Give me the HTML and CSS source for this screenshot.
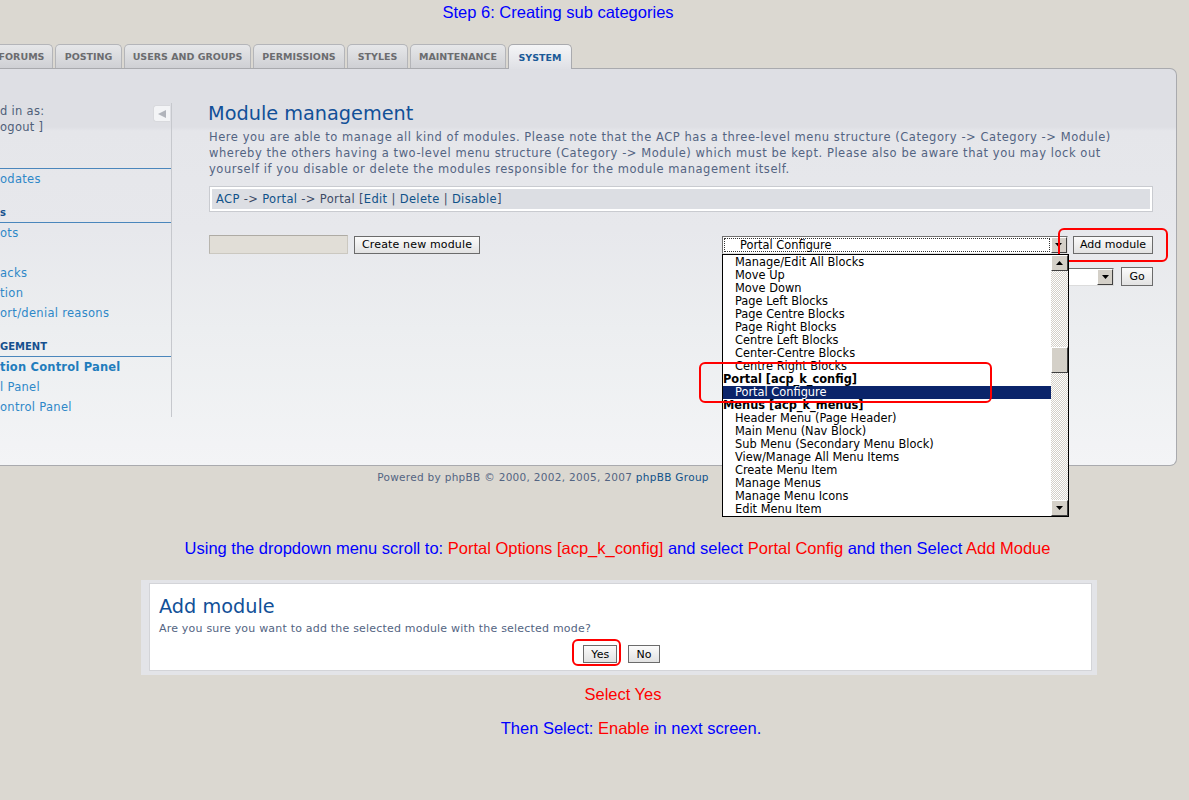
FILE: index.html
```html
<!DOCTYPE html>
<html>
<head>
<meta charset="utf-8">
<title>Step 6: Creating sub categories</title>
<link rel="stylesheet" href="styles.css">
</head>
<body>
<div class="step">Step 6: Creating sub categories</div>

<div class="tabs">
  <div class="tab t-forums">FORUMS</div>
  <div class="tab t-posting">POSTING</div>
  <div class="tab t-users">USERS AND GROUPS</div>
  <div class="tab t-perms">PERMISSIONS</div>
  <div class="tab t-styles">STYLES</div>
  <div class="tab t-maint">MAINTENANCE</div>
  <div class="tab t-system active">SYSTEM</div>
</div>

<div class="panel">
  <div class="side">
    <span class="collapse"><svg width="10" height="10" viewBox="0 0 10 10"><polygon points="9,1 9,9 1,5" fill="#b1b4bb"/></svg></span>
    <div class="login">d in as:<br>ogout ]</div>
    <div class="mhead"></div>
    <div class="mitem">odates</div>
    <div class="mhead">s</div>
    <div class="mitem">ots</div>
    <div class="mitem"></div>
    <div class="mitem">acks</div>
    <div class="mitem">tion</div>
    <div class="mitem">ort/denial reasons</div>
    <div class="mhead">GEMENT</div>
    <div class="mitem current">tion Control Panel</div>
    <div class="mitem">l Panel</div>
    <div class="mitem">ontrol Panel</div>
  </div>

  <div class="main">
    <h1 class="title">Module management</h1>
    <p class="desc">Here you are able to manage all kind of modules. Please note that the ACP has a three-level menu structure (Category -&gt; Category -&gt; Module)<br>whereby the others having a two-level menu structure (Category -&gt; Module) which must be kept. Please also be aware that you may lock out<br>yourself if you disable or delete the modules responsible for the module management itself.</p>

    <div class="crumb"><div class="crumb-in"><a href="#">ACP</a> -&gt; <a href="#">Portal</a> -&gt; Portal [<a href="#">Edit</a> | <a href="#">Delete</a> | <a href="#">Disable</a>]</div></div>

    <div class="row1">
      <div class="grp">
        <span class="input"></span>
        <span class="btn">Create new module</span>
      </div>
      <div class="grp grp-right">
        <div class="select sel-main">
          <span class="sel-val"><span class="focus">Portal Configure</span></span>
          <span class="sel-btn"><svg width="7" height="4" viewBox="0 0 7 4"><polygon points="0,0 7,0 3.5,4" fill="#000"/></svg></span>
          <div class="droplist">
            <div class="opts">
              <div class="opt">Manage/Edit All Blocks</div>
              <div class="opt">Move Up</div>
              <div class="opt">Move Down</div>
              <div class="opt">Page Left Blocks</div>
              <div class="opt">Page Centre Blocks</div>
              <div class="opt">Page Right Blocks</div>
              <div class="opt">Centre Left Blocks</div>
              <div class="opt">Center-Centre Blocks</div>
              <div class="opt">Centre Right Blocks</div>
              <div class="opt grp-opt">Portal [acp_k_config]</div>
              <div class="opt chosen">Portal Configure</div>
              <div class="opt grp-opt">Menus [acp_k_menus]</div>
              <div class="opt">Header Menu (Page Header)</div>
              <div class="opt">Main Menu (Nav Block)</div>
              <div class="opt">Sub Menu (Secondary Menu Block)</div>
              <div class="opt">View/Manage All Menu Items</div>
              <div class="opt">Create Menu Item</div>
              <div class="opt">Manage Menus</div>
              <div class="opt">Manage Menu Icons</div>
              <div class="opt">Edit Menu Item</div>
            </div>
            <div class="sb">
              <span class="sbb"><svg width="7" height="4" viewBox="0 0 7 4"><polygon points="0,4 7,4 3.5,0" fill="#000"/></svg></span>
              <span class="thumb"></span>
              <span class="sb-rest"></span>
              <span class="sbb"><svg width="7" height="4" viewBox="0 0 7 4"><polygon points="0,0 7,0 3.5,4" fill="#000"/></svg></span>
            </div>
            <span class="ring ring-portal"></span>
          </div>
        </div>
        <span class="rel">
          <span class="btn btn-add">Add module</span>
          <span class="ring ring-add"></span>
        </span>
      </div>
    </div>

    <div class="row2">
      <div class="select sel-2">
        <span class="sel-val"></span>
        <span class="sel-btn"><svg width="7" height="4" viewBox="0 0 7 4"><polygon points="0,0 7,0 3.5,4" fill="#000"/></svg></span>
      </div>
      <span class="btn">Go</span>
    </div>
  </div>
</div>

<div class="footer">Powered by phpBB © 2000, 2002, 2005, 2007 <a href="#">phpBB Group</a></div>

<p class="instr">Using the dropdown menu scroll to: <span class="red">Portal Options [acp_k_config]</span> and select <span class="red">Portal Config</span> and then Select <span class="red">Add Modue</span></p>

<div class="confirm">
  <div class="confirm-in">
    <h2 class="ctitle">Add module</h2>
    <p class="ctext">Are you sure you want to add the selected module with the selected mode?</p>
    <div class="cbtns">
      <span class="rel">
        <span class="btn">Yes</span>
        <span class="ring ring-yes"></span>
      </span>
      <span class="btn">No</span>
    </div>
  </div>
</div>

<p class="note red">Select Yes</p>
<p class="note note2">Then Select: <span class="red">Enable</span> in next screen.</p>
</body>
</html>
```

FILE: styles.css
```css
* { box-sizing: border-box; }
html, body { margin: 0; padding: 0; }
body {
  background: #dbd8d1;
  font-family: "DejaVu Sans", Verdana, sans-serif;
  width: 1189px;
  min-height: 800px;
  overflow-x: hidden;
}
a { color: #105289; text-decoration: none; }

.step {
  font-family: "Liberation Sans", Arial, sans-serif;
  font-size: 16.5px;
  line-height: 20px;
  color: #0000ff;
  text-align: center;
  width: 1116px;
  padding-top: 2px;
}

/* tabs */
.tabs {
  display: flex;
  align-items: flex-end;
  gap: 2px;
  height: 24px;
  margin-top: 22px;
  position: relative;
  z-index: 2;
}
.tab {
  height: 24px;
  border: 1px solid #b4b5b9;
  border-bottom: 0;
  border-radius: 5px 5px 0 0;
  background: linear-gradient(#e6e7e9, #cfd0d4);
  color: #6b6c6f;
  font-weight: bold;
  font-size: 9.5px;
  display: flex;
  align-items: center;
  justify-content: center;
  white-space: nowrap;
}
.t-forums { width: 63px; margin-left: -10px; }
.t-posting { width: 67px; }
.t-users { width: 127px; }
.t-perms { width: 92px; }
.t-styles { width: 61px; }
.t-maint { width: 96px; }
.t-system { width: 64px; }
.tab.active {
  height: 25px;
  margin-bottom: -1px;
  background: linear-gradient(#f4f5f7, #dfe0e5);
  color: #1b5a98;
  border-color: #a9aaae;
}

/* panel */
.panel {
  width: 1177px;
  display: flex;
  border-top: 1px solid #a9aaae;
  border-right: 1px solid #a9aaae;
  border-bottom: 1px solid #a9aaae;
  border-radius: 0 7px 7px 0;
  background: linear-gradient(180deg, #dedfe4 0, #dedfe4 58px, #e5e6ea 62px, #e7e8ec 160px, #eceef0 260px, #f3f4f6 100%);
  padding-bottom: 48px;
}
.side {
  width: 172px;
  flex: none;
  margin-top: 34px;
  border-right: 1px solid #c6c8cd;
  position: relative;
}
.collapse {
  position: absolute;
  right: 1px;
  top: 2px;
  width: 17px;
  height: 17px;
  background: #f3f4f6;
  border: 1px solid #d8d9dd;
  border-right: 0;
  border-radius: 3px 0 0 3px;
  display: flex;
  align-items: center;
  justify-content: center;
}
.login {
  font-size: 11.5px;
  letter-spacing: 0.3px;
  line-height: 16px;
  color: #4f5f79;
}
.mhead {
  margin-top: 16px;
  height: 18px;
  line-height: 16px;
  padding-bottom: 1px;
  border-bottom: 1px solid #4a86bc;
  font-size: 10px;
  font-weight: bold;
  color: #16508e;
}
.mitem {
  height: 20px;
  line-height: 20px;
  font-size: 11.5px;
  letter-spacing: 0.3px;
  color: #2e88c8;
  white-space: nowrap;
}
.mitem.current { font-weight: bold; color: #1f7dbd; letter-spacing: 0.2px; }

/* main */
.main {
  flex: 1;
  padding: 33px 23px 0 36px;
}
.title {
  margin: 0;
  font-size: 19.3px;
  font-weight: normal;
  line-height: 24px;
  color: #115098;
}
.desc {
  margin: 3px 0 0 1px;
  font-size: 11.5px;
  letter-spacing: 0.55px;
  line-height: 16px;
  color: #536482;
  white-space: nowrap;
}
.crumb {
  margin: 9px 0 0 1px;
  border: 1px solid #c9cbd0;
  background: #fff;
  padding: 2px;
}
.crumb-in {
  background: #dcdee3;
  padding: 3px 4px;
  font-size: 11.5px;
  letter-spacing: 0.35px;
  line-height: 14px;
  color: #3c4b66;
}

.row1 {
  margin: 23px 0 0 1px;
  display: flex;
  justify-content: space-between;
  align-items: center;
  height: 19px;
}
.grp { display: flex; align-items: center; gap: 6px; }
.grp-right { gap: 5px; }
.input {
  width: 139px;
  height: 19px;
  background: #e1ded7;
  border: 1px solid #cbc8c0;
  border-top-color: #aeaba4;
  border-left-color: #b8b5ae;
}
.btn {
  display: inline-flex;
  align-items: center;
  height: 18px;
  padding: 0 7px;
  font-size: 11px;
  letter-spacing: 0.15px;
  color: #000;
  border: 1px solid #6b6b6b;
  background: linear-gradient(#fbfbfb, #e2e2e2);
  white-space: nowrap;
}
.btn-add { padding: 0 6px; letter-spacing: 0; }
.rel { position: relative; display: inline-flex; }
.ring {
  position: absolute;
  border: 2px solid #ff0000;
  border-radius: 6px;
  pointer-events: none;
}
.ring-add { left: -15px; top: -8px; width: 110px; height: 34px; }

.select {
  position: relative;
  height: 18px;
  display: flex;
  background: #fff;
  border: 1px solid;
  border-color: #6f6f6f #dcdcdc #dcdcdc #6f6f6f;
}
.sel-main { width: 346px; }
.sel-val {
  flex: 1;
  padding: 1px;
  display: flex;
}
.focus {
  flex: 1;
  border: 1px dotted #333;
  padding-left: 15px;
  font-size: 11.4px;
  line-height: 12px;
  color: #000;
  white-space: nowrap;
}
.sel-btn {
  width: 16px;
  height: 16px;
  background: #d4d0c8;
  border: 1px solid;
  border-color: #fff #404040 #404040 #fff;
  display: flex;
  align-items: center;
  justify-content: center;
}
.droplist {
  position: absolute;
  left: -1px;
  top: 17px;
  width: 347px;
  height: 263px;
  border: 1px solid #000;
  background: #fff;
  display: flex;
  z-index: 5;
}
.opts { flex: 1; padding-top: 1px; }
.opt {
  height: 13px;
  line-height: 13px;
  padding-left: 12px;
  font-size: 11.4px;
  color: #000;
  white-space: nowrap;
}
.opt.grp-opt { font-weight: bold; padding-left: 0; }
.opt.chosen { background: #0a246a; color: #fff; }
.sb {
  width: 17px;
  display: flex;
  flex-direction: column;
  background: repeating-conic-gradient(#d4d0c8 0 25%, #ffffff 0 50%) 0 0 / 2px 2px;
}
.sbb {
  height: 16px;
  background: #d4d0c8;
  border: 1px solid;
  border-color: #fff #404040 #404040 #fff;
  display: flex;
  align-items: center;
  justify-content: center;
}
.thumb {
  margin-top: 76px;
  height: 26px;
  background: #d4d0c8;
  border: 1px solid;
  border-color: #fff #404040 #404040 #fff;
}
.sb-rest { flex: 1; }
.ring-portal { left: -24px; top: 107px; width: 293px; height: 41px; }

.row2 {
  margin-top: 13px;
  display: flex;
  justify-content: flex-end;
  align-items: center;
  gap: 7px;
}
.sel-2 { width: 200px; height: 18px; }
.row2 .btn { height: 19px; }

.footer {
  margin-top: 4px;
  width: 1086px;
  text-align: center;
  font-size: 10.5px;
  letter-spacing: 0.3px;
  line-height: 14px;
  color: #536482;
}

.instr {
  margin: 54px 0 0;
  padding-left: 46px;
  text-align: center;
  font-family: "Liberation Sans", Arial, sans-serif;
  font-size: 16.5px;
  line-height: 20px;
  color: #0000ff;
  white-space: nowrap;
}
.red { color: #ff0000; }

.confirm {
  margin: 22px 0 0 141px;
  width: 956px;
  padding: 3px 5px 4px 8px;
  background: #e3e4e8;
}
.confirm-in {
  background: #fff;
  border: 1px solid #d3d4d8;
  padding: 11px 9px 7px;
}
.ctitle {
  margin: 0 0 2px;
  font-size: 19.3px;
  font-weight: normal;
  line-height: 24px;
  color: #115098;
}
.ctext {
  margin: 0;
  font-size: 11px;
  letter-spacing: 0.2px;
  line-height: 16px;
  color: #536482;
}
.cbtns {
  margin-top: 8px;
  display: flex;
  justify-content: center;
  gap: 11px;
}
.cbtns .rel { margin-left: 2px; }
.ring-yes { left: -11px; top: -6px; width: 49px; height: 27px; }

.note {
  margin: 9px 0 0 141px;
  width: 956px;
  padding-left: 8px;
  text-align: center;
  font-family: "Liberation Sans", Arial, sans-serif;
  font-size: 16.5px;
  line-height: 20px;
  color: #0000ff;
}
.note.red { color: #ff0000; }
.note2 { margin-top: 14px; padding-left: 24px; }
```
